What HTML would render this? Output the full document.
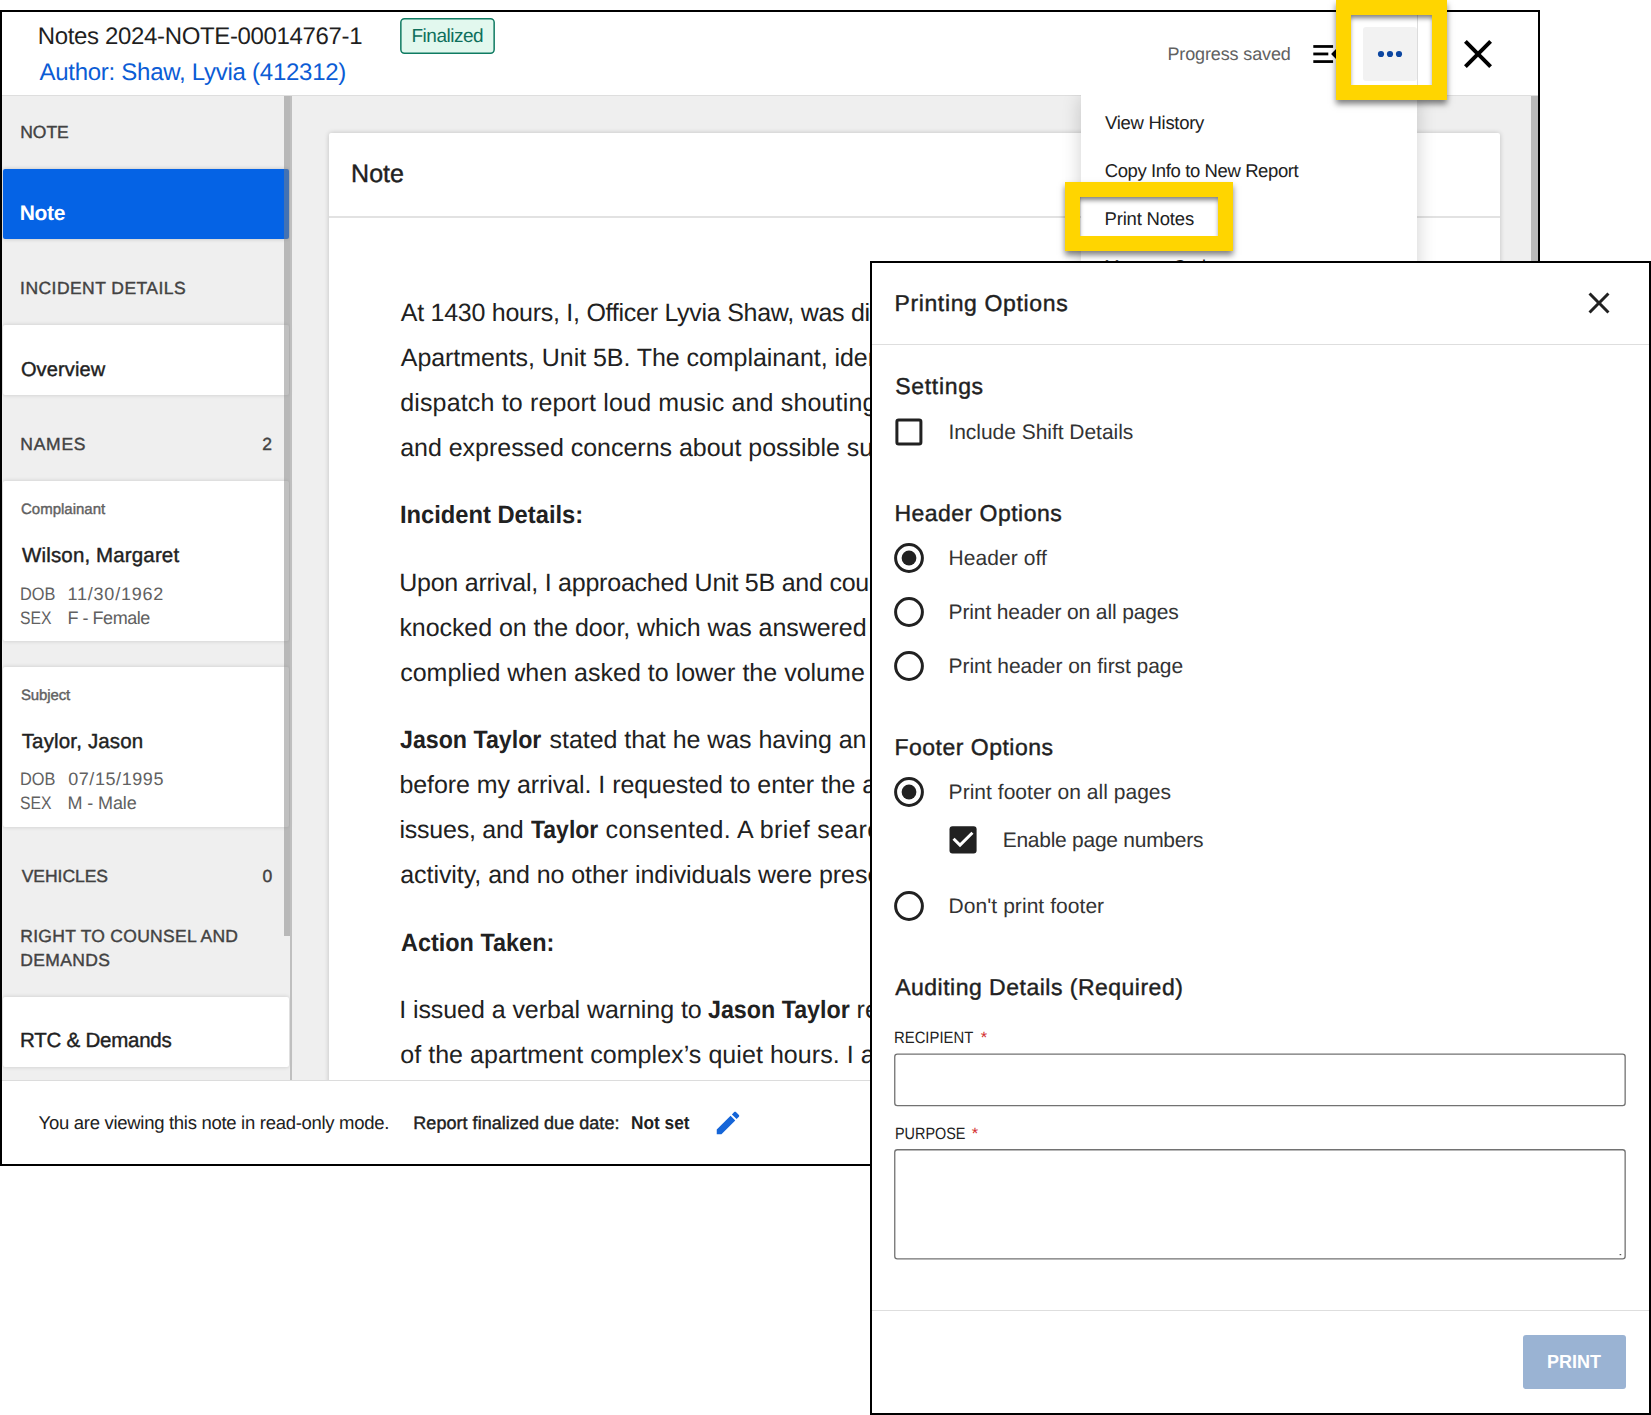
<!DOCTYPE html>
<html lang="en">
<head>
<meta charset="utf-8">
<title>Print Notes</title>
<style>
html,body{margin:0;padding:0;}
body{text-rendering:geometricPrecision;width:1651px;height:1415px;position:relative;overflow:hidden;background:#fff;font-family:"Liberation Sans",sans-serif;}
.a{position:absolute;box-sizing:border-box;}
.t{position:absolute;white-space:nowrap;}
#w{left:0;top:0;width:1538px;height:1164px;overflow:hidden;}
#wb{left:0;top:10px;width:1540px;height:1156px;border:2px solid #000;}
.card{background:#fff;border-radius:2px;box-shadow:0 0 4px rgba(0,0,0,.17);}
#d{left:870px;top:261px;width:781px;height:1154px;border:2px solid #000;background:#fff;}
#dl{left:0;top:0;width:1651px;height:1415px;overflow:hidden;}
.yb{border:15px solid #ffd500;box-shadow:0 4px 6px rgba(0,0,0,.5),inset 0 4px 5px -1px rgba(0,0,0,.5);}
.t b{letter-spacing:-0.954px;}
</style>
</head>
<body>
<!-- ================= main window ================= -->
<div id="w" class="a">
  <!-- main gray background -->
  <div class="a" style="left:2px;top:95px;width:1536px;height:985px;background:#efefef;"></div>
  <!-- sidebar -->
  <div class="a" style="left:2px;top:95px;width:290px;height:985px;background:#efefef;"></div>
  <div class="a" style="left:3px;top:169px;width:286px;height:70px;background:#0563e5;border-radius:2px;box-shadow:0 0 4px rgba(0,0,0,.2);"></div>
  <div class="a card" style="left:3px;top:325px;width:286px;height:69.5px;"></div>
  <div class="a card" style="left:3px;top:481px;width:286px;height:159.5px;"></div>
  <div class="a card" style="left:3px;top:667px;width:286px;height:160px;"></div>
  <div class="a card" style="left:3px;top:997px;width:286px;height:70px;"></div>
  <!-- sidebar scrollbar -->
  <div class="a" style="left:284px;top:95px;width:6px;height:840.5px;background:rgba(130,130,130,.5);"></div>
  <div class="a" style="left:290px;top:95px;width:2px;height:985px;background:#bfbfbf;"></div>
  <!-- note card -->
  <div class="a" style="left:329px;top:133px;width:1171px;height:960px;background:#fff;border-radius:2px;box-shadow:0 0 5px rgba(0,0,0,.2);"></div>
  <div class="a" style="left:329px;top:216px;width:1171px;height:2px;background:#e2e2e2;"></div>
  <!-- main scrollbar -->
  <div class="a" style="left:1531px;top:95px;width:7px;height:985px;background:#b8b8b8;"></div>
  <!-- header -->
  <div class="a" style="left:2px;top:12px;width:1536px;height:83px;background:#fff;"></div>
  <div class="a" style="left:2px;top:95px;width:1536px;height:1px;background:#dedede;"></div>
  <svg class="a" style="left:398px;top:16px;" width="100" height="40" viewBox="398 16 100 40"><rect x="400.85" y="18.65" width="93.3" height="34.5" rx="3.6" fill="#e2f8ee" stroke="#0f7b62" stroke-width="1.5"/></svg>
  <!-- menu_open icon -->
  <svg class="a" style="left:1309px;top:36px;" width="35" height="35" viewBox="0 0 35 35"><g fill="#000"><rect x="4.3" y="9.1" width="19.8" height="2.75"/><rect x="4.3" y="16.55" width="15" height="2.8"/><rect x="4.3" y="24.2" width="19.8" height="2.75"/><polygon points="22.1,18 29,11.1 29,24.9"/></g></svg>
  <!-- dots button -->
  <div class="a" style="left:1363px;top:27px;width:53.5px;height:53.5px;background:#f2f2f2;border-radius:3px;"></div>
  <svg class="a" style="left:1363px;top:27px;" width="54" height="54" viewBox="0 0 54 54"><g fill="#0d47a1"><circle cx="18" cy="27" r="3.1"/><circle cx="27" cy="27" r="3.1"/><circle cx="36" cy="27" r="3.1"/></g></svg>
  <div class="a" style="left:1417px;top:12px;width:1px;height:83px;background:#dcdcdc;"></div>
  <!-- close X -->
  <svg class="a" style="left:1454px;top:30px;" width="48" height="48" viewBox="0 0 24 24"><path fill="#000" d="M19 6.410L17.590 5 12 10.590 6.410 5 5 6.410 10.590 12 5 17.590 6.410 19 12 13.410 17.590 19 19 17.590 13.410 12z"/></svg>
  <!-- footer -->
  <div class="a" style="left:2px;top:1080px;width:1536px;height:84px;background:#fff;border-top:1px solid #dcdcdc;"></div>
  <svg class="a" style="left:712.6px;top:1108px;" width="30" height="30" viewBox="0 0 24 24"><path fill="#1565d8" d="M3 17.250V21h3.750L17.810 9.940l-3.750-3.750L3 17.250zM20.710 7.040c.390-.390.390-1.020 0-1.410l-2.340-2.340c-.390-.390-1.020-.390-1.410 0l-1.830 1.830 3.750 3.750 1.830-1.830z"/></svg>
<div class="t" style="left:37.8px;top:25px;font-size:24.0px;line-height:24.0px;color:#1f1f1f;letter-spacing:-0.349px;">Notes 2024-NOTE-00014767-1</div>
<div class="t" style="left:39.4px;top:61px;font-size:24.0px;line-height:24.0px;color:#0b5cd5;letter-spacing:-0.261px;">Author: Shaw, Lyvia (412312)</div>
<div class="t" style="left:411.5px;top:27px;font-size:19.0px;line-height:19.0px;color:#0f6f5c;letter-spacing:-0.497px;">Finalized</div>
<div class="t" style="left:1167.4px;top:45px;font-size:18.0px;line-height:18.0px;color:#616161;letter-spacing:-0.122px;">Progress saved</div>
<div class="t" style="left:20.2px;top:124px;font-size:17.5px;line-height:17.5px;color:#424242;letter-spacing:-0.008px;-webkit-text-stroke:0.4px;">NOTE</div>
<div class="t" style="left:19.7px;top:203px;font-size:21.0px;line-height:21.0px;color:#ffffff;letter-spacing:-0.298px;font-weight:700;">Note</div>
<div class="t" style="left:20.1px;top:280px;font-size:17.5px;line-height:17.5px;color:#424242;letter-spacing:0.446px;-webkit-text-stroke:0.4px;">INCIDENT DETAILS</div>
<div class="t" style="left:20.9px;top:360px;font-size:20.0px;line-height:20.0px;color:#212121;letter-spacing:0.139px;-webkit-text-stroke:0.4px;">Overview</div>
<div class="t" style="left:20.3px;top:436px;font-size:17.5px;line-height:17.5px;color:#424242;letter-spacing:0.744px;-webkit-text-stroke:0.4px;">NAMES</div>
<div class="t" style="left:262.2px;top:436px;font-size:17.5px;line-height:17.5px;color:#424242;letter-spacing:0.000px;-webkit-text-stroke:0.4px;">2</div>
<div class="t" style="left:21.0px;top:502px;font-size:15.0px;line-height:15.0px;color:#616161;letter-spacing:-0.002px;-webkit-text-stroke:0.4px;">Complainant</div>
<div class="t" style="left:22.1px;top:546px;font-size:20.5px;line-height:20.5px;color:#212121;letter-spacing:0.139px;-webkit-text-stroke:0.4px;">Wilson, Margaret</div>
<div class="t" style="left:19.8px;top:585px;font-size:18.0px;line-height:18.0px;color:#616161;letter-spacing:0.000px;transform:scaleX(0.9079);transform-origin:0 0;">DOB</div>
<div class="t" style="left:67.5px;top:585px;font-size:18.0px;line-height:18.0px;color:#616161;letter-spacing:0.789px;">11/30/1962</div>
<div class="t" style="left:20.4px;top:609px;font-size:18.0px;line-height:18.0px;color:#616161;letter-spacing:0.000px;transform:scaleX(0.8751);transform-origin:0 0;">SEX</div>
<div class="t" style="left:67.4px;top:609px;font-size:18.0px;line-height:18.0px;color:#616161;letter-spacing:-0.454px;">F - Female</div>
<div class="t" style="left:20.9px;top:688px;font-size:15.0px;line-height:15.0px;color:#616161;letter-spacing:-0.118px;-webkit-text-stroke:0.4px;">Subject</div>
<div class="t" style="left:21.7px;top:732px;font-size:20.5px;line-height:20.5px;color:#212121;letter-spacing:0.159px;-webkit-text-stroke:0.4px;">Taylor, Jason</div>
<div class="t" style="left:19.8px;top:770px;font-size:18.0px;line-height:18.0px;color:#616161;letter-spacing:0.000px;transform:scaleX(0.9079);transform-origin:0 0;">DOB</div>
<div class="t" style="left:68.2px;top:770px;font-size:18.0px;line-height:18.0px;color:#616161;letter-spacing:0.577px;">07/15/1995</div>
<div class="t" style="left:20.4px;top:794px;font-size:18.0px;line-height:18.0px;color:#616161;letter-spacing:0.000px;transform:scaleX(0.8751);transform-origin:0 0;">SEX</div>
<div class="t" style="left:67.4px;top:794px;font-size:18.0px;line-height:18.0px;color:#616161;letter-spacing:-0.098px;">M - Male</div>
<div class="t" style="left:21.7px;top:868px;font-size:17.5px;line-height:17.5px;color:#424242;letter-spacing:-0.037px;-webkit-text-stroke:0.4px;">VEHICLES</div>
<div class="t" style="left:262.4px;top:868px;font-size:17.5px;line-height:17.5px;color:#424242;letter-spacing:0.000px;-webkit-text-stroke:0.4px;">0</div>
<div class="t" style="left:20.3px;top:928px;font-size:17.5px;line-height:17.5px;color:#424242;letter-spacing:0.280px;-webkit-text-stroke:0.4px;">RIGHT TO COUNSEL AND</div>
<div class="t" style="left:20.3px;top:952px;font-size:17.5px;line-height:17.5px;color:#424242;letter-spacing:0.333px;-webkit-text-stroke:0.4px;">DEMANDS</div>
<div class="t" style="left:20.1px;top:1031px;font-size:20.5px;line-height:20.5px;color:#212121;letter-spacing:-0.239px;-webkit-text-stroke:0.4px;">RTC &amp; Demands</div>
<div class="t" style="left:38.6px;top:1114px;font-size:18.5px;line-height:18.5px;color:#212121;letter-spacing:-0.293px;">You are viewing this note in read-only mode.</div>
<div class="t" style="left:413.3px;top:1114px;font-size:18.0px;line-height:18.0px;color:#212121;letter-spacing:0.041px;-webkit-text-stroke:0.4px;">Report finalized due date:</div>
<div class="t" style="left:630.6px;top:1114px;font-size:18.5px;line-height:18.5px;color:#212121;letter-spacing:0.000px;transform:scaleX(0.9340);transform-origin:0 0;font-weight:700;">Not set</div>
<div class="t" style="left:351.1px;top:162px;font-size:25.0px;line-height:25.0px;color:#212121;letter-spacing:0.031px;-webkit-text-stroke:0.4px;">Note</div>
<div class="t" style="left:400.8px;top:301px;font-size:25.0px;line-height:25.0px;color:#212121;letter-spacing:-0.266px;">At 1430 hours, I, Officer Lyvia Shaw, was dispatched to a noise complaint at Elm</div>
<div class="t" style="left:400.8px;top:346px;font-size:25.0px;line-height:25.0px;color:#212121;letter-spacing:-0.058px;">Apartments, Unit 5B. The complainant, identified as Margaret Wilson, called</div>
<div class="t" style="left:400.2px;top:391px;font-size:25.0px;line-height:25.0px;color:#212121;letter-spacing:0.158px;">dispatch to report loud music and shouting coming from the neighboring unit</div>
<div class="t" style="left:400.2px;top:436px;font-size:25.0px;line-height:25.0px;color:#212121;letter-spacing:-0.026px;">and expressed concerns about possible substance use.</div>
<div class="t" style="left:399.7px;top:503px;font-size:25.0px;line-height:25.0px;color:#212121;letter-spacing:0.000px;transform:scaleX(0.9485);transform-origin:0 0;font-weight:700;">Incident Details:</div>
<div class="t" style="left:399.2px;top:571px;font-size:25.0px;line-height:25.0px;color:#212121;letter-spacing:-0.229px;">Upon arrival, I approached Unit 5B and could hear loud music from the hallway. I</div>
<div class="t" style="left:399.4px;top:616px;font-size:25.0px;line-height:25.0px;color:#212121;letter-spacing:-0.068px;">knocked on the door, which was answered by Jason Taylor, who</div>
<div class="t" style="left:400.2px;top:661px;font-size:25.0px;line-height:25.0px;color:#212121;letter-spacing:0.012px;">complied when asked to lower the volume immediately.</div>
<div class="t" style="left:400.3px;top:728px;font-size:25.0px;line-height:25.0px;color:#212121;letter-spacing:0.000px;transform:scaleX(0.9278);transform-origin:0 0;font-weight:700;">Jason Taylor</div>
<div class="t" style="left:549.6px;top:728px;font-size:25.0px;line-height:25.0px;color:#212121;letter-spacing:-0.055px;">stated that he was having an argument with a friend shortly</div>
<div class="t" style="left:399.4px;top:773px;font-size:25.0px;line-height:25.0px;color:#212121;letter-spacing:-0.058px;">before my arrival. I requested to enter the apartment to check for safety</div>
<div class="t" style="left:399.5px;top:818px;font-size:25.0px;line-height:25.0px;color:#212121;letter-spacing:-0.238px;">issues, and</div>
<div class="t" style="left:531.0px;top:818px;font-size:25.0px;line-height:25.0px;color:#212121;letter-spacing:0.000px;transform:scaleX(0.9195);transform-origin:0 0;font-weight:700;">Taylor</div>
<div class="t" style="left:605.6px;top:818px;font-size:25.0px;line-height:25.0px;color:#212121;letter-spacing:0.313px;">consented. A brief search revealed no signs of illegal</div>
<div class="t" style="left:400.2px;top:863px;font-size:25.0px;line-height:25.0px;color:#212121;letter-spacing:-0.046px;">activity, and no other individuals were present.</div>
<div class="t" style="left:400.6px;top:931px;font-size:25.0px;line-height:25.0px;color:#212121;letter-spacing:0.000px;transform:scaleX(0.9378);transform-origin:0 0;font-weight:700;">Action Taken:</div>
<div class="t" style="left:399.2px;top:998px;font-size:25.0px;line-height:25.0px;color:#212121;letter-spacing:-0.069px;">I issued a verbal warning to</div>
<div class="t" style="left:708.2px;top:998px;font-size:25.0px;line-height:25.0px;color:#212121;letter-spacing:0.000px;transform:scaleX(0.9305);transform-origin:0 0;font-weight:700;">Jason Taylor</div>
<div class="t" style="left:856.6px;top:998px;font-size:25.0px;line-height:25.0px;color:#212121;letter-spacing:0.000px;">regarding the noise and reminded him</div>
<div class="t" style="left:400.2px;top:1043px;font-size:25.0px;line-height:25.0px;color:#212121;letter-spacing:0.058px;">of the apartment complex’s quiet hours. I advised him of the consequences</div>
  <!-- dropdown menu -->
  <div class="a" style="left:1081px;top:95px;width:335.5px;height:230px;background:#fff;box-shadow:0 2px 18px rgba(0,0,0,.19);clip-path:inset(0 -50px -50px -50px);"></div>
<div class="t" style="left:1105.1px;top:114px;font-size:18.5px;line-height:18.5px;color:#212121;letter-spacing:-0.294px;">View History</div>
<div class="t" style="left:1104.7px;top:162px;font-size:18.5px;line-height:18.5px;color:#212121;letter-spacing:-0.387px;">Copy Info to New Report</div>
<div class="t" style="left:1104.6px;top:210px;font-size:18.5px;line-height:18.5px;color:#212121;letter-spacing:-0.194px;">Print Notes</div>
<div class="t" style="left:1104.2px;top:258px;font-size:18.5px;line-height:18.5px;color:#212121;letter-spacing:-0.450px;">Manage Codes</div>
</div>
<div id="wb" class="a"></div>

<!-- ================= printing options dialog ================= -->
<div id="d" class="a"></div>
<div id="dl" class="a">
  <div class="a" style="left:872px;top:344px;width:777px;height:1px;background:#dedede;"></div>
  <svg class="a" style="left:1581px;top:284.8px;" width="36" height="36" viewBox="0 0 24 24"><path fill="#212121" d="M19 6.410L17.590 5 12 10.590 6.410 5 5 6.410 10.590 12 5 17.590 6.410 19 12 13.410 17.590 19 19 17.590 13.410 12z"/></svg>
  <!-- checkbox, radios -->
  <svg class="a" style="left:870px;top:261px;" width="781" height="1154" viewBox="870 261 781 1154">
    <rect x="896.9" y="419.9" width="24" height="24.2" rx="1.8" fill="none" stroke="#212121" stroke-width="3"/>
    <g fill="none" stroke="#212121" stroke-width="3">
      <circle cx="909" cy="558" r="13.4"/><circle cx="909" cy="612" r="13.4"/><circle cx="909" cy="666" r="13.4"/>
      <circle cx="909" cy="792" r="13.4"/><circle cx="909" cy="906" r="13.4"/>
    </g>
    <circle cx="909" cy="558" r="7.4" fill="#212121"/><circle cx="909" cy="792" r="7.4" fill="#212121"/>
    <rect x="949.5" y="826.3" width="27.1" height="27.1" rx="3" fill="#212121"/>
    <polygon points="960,847.3 952.5,839.8 954.6,837.7 960,843.05 971.4,831.7 973.5,833.8" fill="#fff"/>
  </svg>
  <!-- inputs -->
  <svg class="a" style="left:890px;top:1050px;" width="740" height="215" viewBox="890 1050 740 215"><g fill="#fff" stroke="#727272" stroke-width="1.3"><rect x="894.75" y="1054.05" width="730.4" height="51.5" rx="2.6"/><rect x="894.75" y="1149.75" width="730.4" height="109.1" rx="2.6"/></g><rect x="1619.6" y="1254" width="1.6" height="1.2" fill="#555"/></svg>
  <div class="a" style="left:872px;top:1310px;width:777px;height:1px;background:#dedede;"></div>
  <div class="a" style="left:1523px;top:1335px;width:103px;height:54px;background:#9ab3d3;border-radius:3px;"></div>
<div class="t" style="left:894.4px;top:292px;font-size:23.0px;line-height:23.0px;color:#212121;letter-spacing:0.645px;-webkit-text-stroke:0.4px;">Printing Options</div>
<div class="t" style="left:895.3px;top:375px;font-size:23.0px;line-height:23.0px;color:#212121;letter-spacing:0.670px;-webkit-text-stroke:0.4px;">Settings</div>
<div class="t" style="left:948.4px;top:422px;font-size:21.0px;line-height:21.0px;color:#333333;letter-spacing:-0.035px;">Include Shift Details</div>
<div class="t" style="left:894.4px;top:502px;font-size:23.0px;line-height:23.0px;color:#212121;letter-spacing:0.477px;-webkit-text-stroke:0.4px;">Header Options</div>
<div class="t" style="left:948.6px;top:548px;font-size:21.0px;line-height:21.0px;color:#333333;letter-spacing:0.072px;">Header off</div>
<div class="t" style="left:948.6px;top:602px;font-size:21.0px;line-height:21.0px;color:#333333;letter-spacing:-0.135px;">Print header on all pages</div>
<div class="t" style="left:948.6px;top:656px;font-size:21.0px;line-height:21.0px;color:#333333;letter-spacing:-0.049px;">Print header on first page</div>
<div class="t" style="left:894.4px;top:736px;font-size:23.0px;line-height:23.0px;color:#212121;letter-spacing:0.501px;-webkit-text-stroke:0.4px;">Footer Options</div>
<div class="t" style="left:948.6px;top:782px;font-size:21.0px;line-height:21.0px;color:#333333;letter-spacing:0.028px;">Print footer on all pages</div>
<div class="t" style="left:1002.7px;top:830px;font-size:21.0px;line-height:21.0px;color:#333333;letter-spacing:-0.263px;">Enable page numbers</div>
<div class="t" style="left:948.6px;top:896px;font-size:21.0px;line-height:21.0px;color:#333333;letter-spacing:0.055px;">Don't print footer</div>
<div class="t" style="left:895.2px;top:976px;font-size:23.0px;line-height:23.0px;color:#212121;letter-spacing:0.492px;-webkit-text-stroke:0.4px;">Auditing Details (Required)</div>
<div class="t" style="left:894.4px;top:1030px;font-size:16.5px;line-height:16.5px;color:#212121;letter-spacing:0.000px;transform:scaleX(0.9002);transform-origin:0 0;">RECIPIENT</div>
<div class="t" style="left:980.7px;top:1030px;font-size:16.5px;line-height:16.5px;color:#d32f2f;letter-spacing:0.000px;">*</div>
<div class="t" style="left:894.5px;top:1126px;font-size:16.5px;line-height:16.5px;color:#212121;letter-spacing:0.000px;transform:scaleX(0.8733);transform-origin:0 0;">PURPOSE</div>
<div class="t" style="left:971.7px;top:1126px;font-size:16.5px;line-height:16.5px;color:#d32f2f;letter-spacing:0.000px;">*</div>
<div class="t" style="left:1546.9px;top:1353px;font-size:19.0px;line-height:19.0px;color:#ffffff;letter-spacing:0.000px;transform:scaleX(0.9463);transform-origin:0 0;font-weight:700;">PRINT</div>
</div>

<!-- ================= yellow highlight boxes ================= -->
<div class="a yb" style="left:1336px;top:0;width:111px;height:100px;"></div>
<div class="a yb" style="left:1065px;top:182px;width:168px;height:69px;"></div>
</body>
</html>
